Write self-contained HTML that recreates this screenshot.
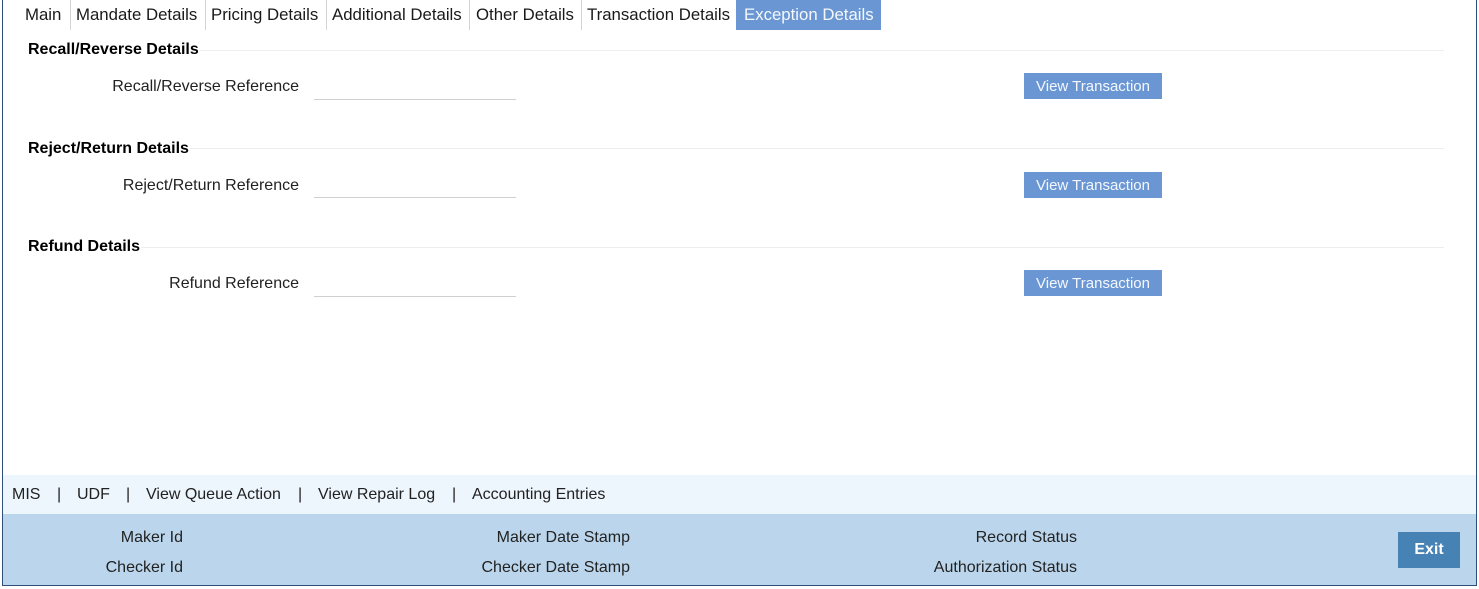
<!DOCTYPE html>
<html>
<head>
<meta charset="utf-8">
<style>
html,body{margin:0;padding:0;background:#fff;}
body{width:1479px;height:589px;position:relative;overflow:hidden;font-family:"Liberation Sans",Arial,sans-serif;font-size:16px;color:#222;}
.a{position:absolute;white-space:nowrap;line-height:20px;}
.r{text-align:right;}
.box{position:absolute;}
.tab{position:absolute;top:5px;line-height:20px;font-size:16.8px;color:#1a1a1a;white-space:nowrap;}
.sep{position:absolute;top:0;width:1px;height:30px;background:#d4d4d4;}
.h{position:absolute;font-weight:bold;line-height:20px;color:#000;background:#fff;white-space:nowrap;padding-right:1px;}
.hl{position:absolute;left:28px;width:1416px;height:1px;background:#eeeeee;}
.u{position:absolute;left:314px;width:202px;height:1px;background:#d0d0d0;}
.btn{position:absolute;left:1024px;width:138px;height:26px;background:#6a97d4;color:#f4f7fc;text-align:center;font-size:15px;line-height:28px;white-space:nowrap;overflow:hidden;}
</style>
</head>
<body>
<div class="box" style="left:2px;top:0;width:1px;height:586px;background:#2f4f7a;"></div>
<div class="box" style="left:1476px;top:0;width:1px;height:586px;background:#2f4f7a;"></div>
<div class="box" style="left:3px;top:475px;width:1473px;height:39px;background:#edf5fd;"></div>
<div class="box" style="left:3px;top:514px;width:1473px;height:71px;background:#bbd6ec;"></div>
<div class="box" style="left:2px;top:585px;width:1475px;height:1px;background:#2f4f7a;"></div>

<div class="tab" style="left:25px;">Main</div>
<div class="sep" style="left:70px;"></div>
<div class="tab" style="left:76px;">Mandate Details</div>
<div class="sep" style="left:205px;"></div>
<div class="tab" style="left:211px;">Pricing Details</div>
<div class="sep" style="left:326px;"></div>
<div class="tab" style="left:332px;">Additional Details</div>
<div class="sep" style="left:469px;"></div>
<div class="tab" style="left:476px;">Other Details</div>
<div class="sep" style="left:581px;"></div>
<div class="tab" style="left:587px;">Transaction Details</div>
<div class="box" style="left:736px;top:0;width:145px;height:30px;background:#6a97d4;"></div>
<div class="tab" style="left:744px;color:#f4f7fc;">Exception Details</div>

<div class="hl" style="top:50px;"></div>
<div class="h" style="left:28px;top:40px;">Recall/Reverse Details</div>
<div class="a r" style="right:1180px;top:77px;">Recall/Reverse Reference</div>
<div class="u" style="top:99px;"></div>
<div class="btn" style="top:73px;">View Transaction</div>

<div class="hl" style="top:148px;"></div>
<div class="h" style="left:28px;top:139px;">Reject/Return Details</div>
<div class="a r" style="right:1180px;top:176px;">Reject/Return Reference</div>
<div class="u" style="top:197px;"></div>
<div class="btn" style="top:172px;">View Transaction</div>

<div class="hl" style="top:247px;"></div>
<div class="h" style="left:28px;top:237px;">Refund Details</div>
<div class="a r" style="right:1180px;top:274px;">Refund Reference</div>
<div class="u" style="top:296px;"></div>
<div class="btn" style="top:270px;">View Transaction</div>

<div class="a" style="left:12px;top:485px;">MIS</div>
<div class="a" style="left:57px;top:485px;">|</div>
<div class="a" style="left:77px;top:485px;">UDF</div>
<div class="a" style="left:126px;top:485px;">|</div>
<div class="a" style="left:146px;top:485px;">View Queue Action</div>
<div class="a" style="left:298px;top:485px;">|</div>
<div class="a" style="left:318px;top:485px;">View Repair Log</div>
<div class="a" style="left:452px;top:485px;">|</div>
<div class="a" style="left:472px;top:485px;">Accounting Entries</div>

<div class="a r" style="right:1296px;top:528px;">Maker Id</div>
<div class="a r" style="right:1296px;top:558px;">Checker Id</div>
<div class="a r" style="right:849px;top:528px;">Maker Date Stamp</div>
<div class="a r" style="right:849px;top:558px;">Checker Date Stamp</div>
<div class="a r" style="right:402px;top:528px;">Record Status</div>
<div class="a r" style="right:402px;top:558px;">Authorization Status</div>

<div class="box" style="left:1398px;top:532px;width:62px;height:36px;background:#4682b4;color:#fff;font-weight:bold;text-align:center;line-height:36px;">Exit</div>
</body>
</html>
